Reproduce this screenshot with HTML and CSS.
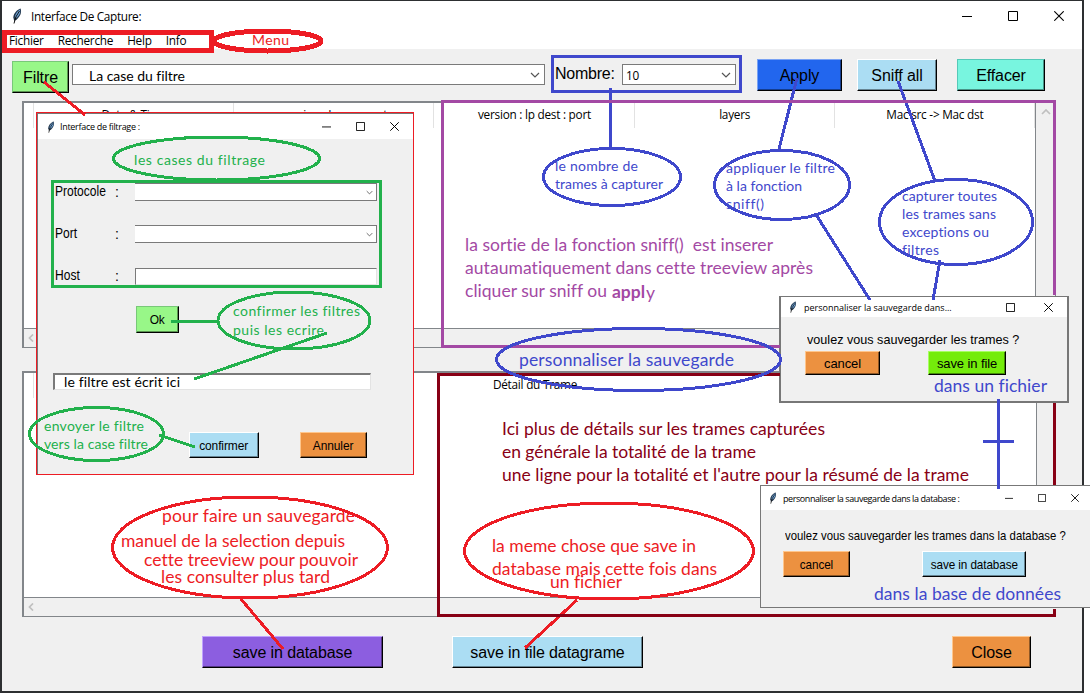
FILE: index.html
```html
<!DOCTYPE html>
<html lang="fr">
<head>
<meta charset="utf-8">
<title>Interface De Capture</title>
<link rel="stylesheet" href="styles.css">
</head>
<body>
<svg class="defs" width="0" height="0">
  <symbol id="feather" viewBox="0 0 10 16">
    <path d="M8.600 .5C5.500 1.500 1.500 5 1.300 9.500L2.200 13L4.800 11.500C8 8.500 10 4.500 8.600 .5Z" fill="#20344a"/>
    <path d="M8 1.500C5.500 3 3 6 2.800 10L5 9.500C7.500 7 8.800 4.500 8 1.500Z" fill="#6fa5da"/>
    <path d="M7.500 3L3.800 9L2 15.500" fill="none" stroke="#111" stroke-width="1"/>
  </symbol>
  <symbol id="min" viewBox="0 0 10 10"><path d="M0 5.500H10" stroke="#000"/></symbol>
  <symbol id="max" viewBox="0 0 10 10"><path d="M.5 .5H9.500V9.500H.5Z" fill="none" stroke="#000"/></symbol>
  <symbol id="x" viewBox="0 0 10 10"><path d="M.3 .3L9.700 9.700M9.700 .3L.3 9.700" stroke="#000" stroke-width="1.100"/></symbol>
  <symbol id="down" viewBox="0 0 10 6"><path d="M1 1L5 5L9 1" fill="none" stroke="#555" stroke-width="1.200"/></symbol>
  <symbol id="up" viewBox="0 0 10 6"><path d="M1 5L5 1L9 5" fill="none" stroke="#bfbfbf" stroke-width="1.700"/></symbol>
  <symbol id="left" viewBox="0 0 6 8"><path d="M5 .5L1.500 4L5 7.500" fill="none" stroke="#bfbfbf" stroke-width="1.700"/></symbol>
</svg>
<div class="desktop">
  <main class="window">
    <header class="titlebar">
      <svg class="feather"><use href="#feather"/></svg>
      <span class="title">Interface De Capture:</span>
      <span class="controls"><svg><use href="#min"/></svg><svg><use href="#max"/></svg><svg><use href="#x"/></svg></span>
    </header>
    <nav class="menu"><span>Fichier</span><span>Recherche</span><span>Help</span><span>Info</span></nav>
    <section class="toolbar">
      <button class="btn green filter-btn">Filtre</button>
      <div class="combo main-combo"><svg><use href="#down"/></svg></div>
      <label class="count">Nombre:</label>
      <div class="combo count-combo"><span>10</span><svg><use href="#down"/></svg></div>
      <button class="btn blue apply">Apply</button>
      <button class="btn sky sniff">Sniff all</button>
      <button class="btn aqua clear">Effacer</button>
    </section>
    <section class="tree">
      <div class="tree-head"><i></i><span>Date &amp; Time</span><span>version : Ip src : port</span><span>version : lp dest : port</span><span>layers</span><span>Mac src -&gt; Mac dst</span></div>
      <div class="vscroll"><svg><use href="#up"/></svg></div>
      <div class="hscroll"><svg><use href="#left"/></svg></div>
    </section>
    <section class="tree second">
      <div class="tree-head detail"><i></i><span>Détail du Trame</span></div>
      <div class="vscroll"></div>
      <div class="hscroll"><svg><use href="#left"/></svg></div>
    </section>
    <footer class="actions">
      <button class="btn violet save-db">save in database</button>
      <button class="btn sky save-file">save in file datagrame</button>
      <button class="btn orange close">Close</button>
    </footer>
  </main>

  <section class="dialog filter-dialog">
    <header class="titlebar">
      <svg class="feather"><use href="#feather"/></svg><span class="title">Interface de filtrage :</span>
      <span class="controls"><svg><use href="#min"/></svg><svg><use href="#max"/></svg><svg><use href="#x"/></svg></span>
    </header>
    <div class="fields">
      <label>Protocole</label><b>:</b><div class="combo"><svg><use href="#down"/></svg></div>
      <label>Port</label><b>:</b><div class="combo"><svg><use href="#down"/></svg></div>
      <label>Host</label><b>:</b><div class="entry"></div>
    </div>
    <button class="btn green ok"><span>Ok</span></button>
    <div class="entry result"></div>
    <div class="dialog-actions">
      <button class="btn sky"><span>confirmer</span></button>
      <button class="btn orange"><span>Annuler</span></button>
    </div>
  </section>

  <section class="dialog file-dialog">
    <header class="titlebar">
      <svg class="feather"><use href="#feather"/></svg><span class="title">personnaliser la sauvegarde dans...</span>
      <span class="controls"><svg><use href="#max"/></svg><svg><use href="#x"/></svg></span>
    </header>
    <p><span>voulez vous sauvegarder les trames ?</span></p>
    <div class="dialog-actions">
      <button class="btn orange"><span>cancel</span></button>
      <button class="btn lime"><span>save in file</span></button>
    </div>
  </section>

  <section class="dialog db-dialog">
    <header class="titlebar">
      <svg class="feather"><use href="#feather"/></svg><span class="title">personnaliser la sauvegarde dans la database :</span>
      <span class="controls"><svg><use href="#min"/></svg><svg><use href="#max"/></svg><svg><use href="#x"/></svg></span>
    </header>
    <p><span>voulez vous sauvegarder les trames dans la database ?</span></p>
    <div class="dialog-actions">
      <button class="btn orange"><span>cancel</span></button>
      <button class="btn sky"><span>save in database</span></button>
    </div>
  </section>

  <svg class="notes" viewBox="0 0 1090 700">
    <g class="shape red">
      <rect class="thick" x="4.500" y="32.500" width="207" height="17.500"/>
      <ellipse class="thick" cx="267.500" cy="41" rx="53.500" ry="10"/>
      <path d="M44 82L85 115"/>
      <path class="thin" d="M36.500 112.500H413.500V474.500H36.500Z"/>
      <ellipse cx="250" cy="547.500" rx="137.500" ry="50.500"/>
      <path d="M241 599L283 649"/>
      <ellipse cx="609" cy="551" rx="144.500" ry="48"/>
      <path d="M577 600L525 648"/>
    </g>
    <g class="shape blue-ink">
      <rect x="552.500" y="56.500" width="188" height="35"/>
      <path d="M610.500 88V148"/>
      <ellipse cx="612" cy="177" rx="68.500" ry="28.500"/>
      <path d="M797 78L779 149"/>
      <ellipse cx="782" cy="185" rx="67.500" ry="34.500"/>
      <path d="M815 213L870 300"/>
      <path d="M898 81L935 181"/>
      <ellipse cx="956" cy="222" rx="76.500" ry="42.500"/>
      <path d="M940 260L933 300"/>
    </g>
    <g class="shape purple"><path d="M780 346.500H442.500V101.500H1054.500V295"/></g>
    <g class="shape maroon"><path d="M780 374.500H438.500V615.500H1054.500V609M1054.500 403V485"/></g>
    <g class="shape blue-ink">
      <ellipse cx="638.500" cy="359.500" rx="142" ry="31"/>
      <path d="M998.500 399V489M983 441.500H1014"/>
    </g>
    <g class="shape green-ink">
      <ellipse cx="216.500" cy="158.500" rx="103" ry="21.500"/>
      <rect x="52.500" y="181.500" width="328" height="105"/>
      <ellipse cx="294" cy="320.500" rx="76" ry="28.500"/>
      <path d="M171 321.500H217M327 333L194 379M159 435L195 447"/>
      <ellipse cx="96.500" cy="434" rx="67" ry="26.500"/>
    </g>
    <g class="small black">
      <text x="89" y="81" textLength="96">La case du filtre</text>
      <text x="64" y="387" textLength="116">le filtre est écrit ici</text>
    </g>
    <g class="small red-text"><text x="252" y="45" textLength="37">Menu</text></g>
    <g class="small green-text">
      <text x="134" y="165" textLength="131">les cases du filtrage</text>
      <text x="233" y="316" textLength="127">confirmer les filtres</text>
      <text x="233" y="335" textLength="91">puis les ecrire</text>
      <text x="44" y="431" textLength="100">envoyer le filtre</text>
      <text x="44" y="449" textLength="104">vers la case filtre</text>
    </g>
    <g class="small blue-text">
      <text x="555" y="171" textLength="83">le nombre de</text>
      <text x="555" y="189" textLength="108">trames à capturer</text>
      <text x="726" y="173" textLength="109">appliquer le filtre</text>
      <text x="726" y="191" textLength="76">à la fonction</text>
      <text x="726" y="209" textLength="38">sniff()</text>
      <text x="902" y="201" textLength="95">capturer toutes</text>
      <text x="902" y="219" textLength="94">les trames sans</text>
      <text x="902" y="237" textLength="87">exceptions ou</text>
      <text x="902" y="255" textLength="37">filtres</text>
    </g>
    <g class="large purple-text">
      <text x="465" y="251" textLength="308">la sortie de la fonction sniff()&#160; est inserer</text>
      <text x="465" y="274" textLength="348">autaumatiquement dans cette treeview après</text>
      <text x="465" y="297" textLength="142">cliquer sur sniff ou</text>
      <text class="bold" x="612" y="298" textLength="33">appl</text>
      <text x="646" y="299">y</text>
    </g>
    <g class="large blue-text">
      <text x="519" y="366" textLength="215">personnaliser la sauvegarde</text>
      <text x="934" y="392" textLength="113">dans un fichier</text>
      <text x="874" y="600" textLength="187">dans la base de données</text>
    </g>
    <g class="large maroon-text">
      <text x="502" y="435" textLength="323">Ici plus de détails sur les trames capturées</text>
      <text x="502" y="458" textLength="254">en générale la totalité de la trame</text>
      <text x="502" y="481" textLength="467">une ligne pour la totalité et l'autre pour la résumé de la trame</text>
    </g>
    <g class="large red-text">
      <text x="162" y="522" textLength="193">pour faire un sauvegarde</text>
      <text x="121" y="547" textLength="224">manuel de la selection depuis</text>
      <text x="144" y="566" textLength="214">cette treeview pour pouvoir</text>
      <text x="161" y="583" textLength="169">les consulter plus tard</text>
      <text x="492" y="552" textLength="204">la meme chose que save in</text>
      <text x="492" y="575" textLength="225">database mais cette fois dans</text>
      <text x="550" y="588" textLength="72">un fichier</text>
    </g>
  </svg>
</div>
</body>
</html>
```

FILE: styles.css
```css
* { box-sizing: border-box; }
body { margin: 0; background: #fff; font: 11.8px "Open Sans", "Noto Sans", sans-serif; letter-spacing: -.25px; color: #000; overflow: hidden; }
.defs { position: absolute; }
.desktop { position: relative; width: 1090px; height: 700px; overflow: hidden; }
.window { width: 1084px; height: 693px; border: solid #2d2f31; border-width: 1px 2px 2px; background: #f0f0f0; display: flex; flex-direction: column; }

.titlebar { display: flex; align-items: center; background: #fff; flex: none; white-space: nowrap; }
.window > .titlebar { height: 29px; padding: 0 18px 0 10px; }
.feather { width: 10px; height: 16px; flex: none; }
.window > .titlebar .title { margin-left: 9px; letter-spacing: -.35px; }
.controls { margin-left: auto; display: flex; }
.controls svg { width: 10px; height: 10px; }
.window > .titlebar .controls { gap: 36px; }
.menu { height: 19px; background: #fff; display: flex; gap: 14px; padding-left: 7px; line-height: 21px; }

.btn { font: 16px "Liberation Sans", Arial, sans-serif; letter-spacing: -.1px; color: #000; border: 1px solid; border-color: #fff #000 #000 #fff; box-shadow: inset -1px -1px #0006; padding: 1px 0 0; margin: 0; height: 32px; border-radius: 0; white-space: nowrap; flex: none; }
.green { background: #98f788; border-color: #78c878 #000 #000 #78c878; }
.blue { background: #2266ee; border-color: #79a2f4 #000 #000 #79a2f4; }
.sky { background: #abddf3; }
.aqua { background: #78f5df; border-color: #55c9b8 #000 #000 #55c9b8; }
.violet { background: #8c5ee0; border-color: #bfa1ff #000 #000 #bfa1ff; }
.orange { background: #ec9140; border-color: #ffc68c #000 #000 #ffc68c; }
.lime { background: #74ec0b; border-color: #a7ff63 #000 #000 #a7ff63; }

.toolbar { display: flex; height: 52px; padding: 10px 0 0 10px; align-items: flex-start; flex: none; }
.filter-btn { width: 57px; margin-top: 2px; }
.combo { background: #fff; border: 1px solid #7a7a7a; height: 21px; display: flex; align-items: center; padding: 0 4px; }
.combo svg { width: 10px; height: 6px; margin-left: auto; }
.main-combo { width: 473px; margin: 5px 0 0 3px; }
.count { font: 16px "Liberation Sans", Arial, sans-serif; margin: 6px 0 0 10px; width: 67px; }
.count-combo { width: 114px; margin-top: 5px; padding-left: 3px; }
.apply { width: 85px; margin-left: 21px; }
.sniff { width: 80px; margin-left: 15px; }
.clear { width: 88px; margin-left: 20px; }

.tree { margin-left: 20px; width: 1034px; height: 247px; background: #fff; border: solid #82868a; border-width: 2px 1px 1px 2px; display: grid; grid-template: 1fr 19px / 1fr 20px; flex: none; }
.second { margin-top: 23px; height: 246px; }
.tree-head { display: flex; height: 25px; line-height: 23px; }
.tree-head i { width: 10px; border-right: 1px solid #e2e2e2; }
.tree-head span { width: 200.200px; padding-left: 1px; border-right: 1px solid #e2e2e2; text-align: center; }
.detail span { width: 1002px; }
.vscroll { background: #f0f0f0; border-left: 1px solid #82868a; text-align: center; line-height: 14px; }
.second .vscroll { border-left-color: #82868a; }
.vscroll svg { width: 10px; height: 6px; }
.hscroll { grid-column: 1 / 3; border-top: 1px solid #82868a; background: #f0f0f0; padding-left: 4px; display: flex; align-items: center; }
.hscroll svg { width: 6px; height: 8px; }

.actions { display: flex; padding: 19px 51px 0 200px; }
.save-db { width: 181px; }
.save-file { width: 191px; margin-left: 69px; }
.close { width: 79px; margin-left: auto; }

.dialog { position: absolute; background: #f0f0f0; border: 1px solid #777; font-size: 9px; letter-spacing: 0; }
.dialog .feather { width: 8px; height: 12px; }
.dialog .btn { font-size: 13px; }
.dialog .btn span, .dialog p span { display: inline-block; }
.dialog p { margin: 0; font: 13px/16px "Liberation Sans", Arial, sans-serif; white-space: nowrap; }
.dialog p span { transform-origin: left; }
.dialog-actions { display: flex; }

.filter-dialog { left: 37px; top: 113px; width: 377px; height: 362px; }
.filter-dialog .titlebar { height: 25px; padding: 0 14px 0 9px; }
.filter-dialog .title { margin-left: 5px; letter-spacing: -.3px; }
.filter-dialog .controls { gap: 25px; }
.filter-dialog .controls svg { width: 9px; height: 9px; }
.fields { display: grid; grid-template-columns: 58px 22px 242px; grid-auto-rows: 18px; row-gap: 24px; margin: 44px 0 0 17px; align-items: center; font: 14px "Liberation Sans", Arial, sans-serif; }
.fields label { transform: translateY(-1px) scaleX(.86); transform-origin: left; }
.fields b { font-weight: normal; padding-left: 2px; }
.fields .combo { height: 18px; border-left: 0; }
.fields .combo svg { width: 7px; height: 5px; }
.fields .combo { padding-right: 3px; }
.entry { height: 17px; background: #fff; border: solid; border-width: 1px; border-color: #7a7a7a #e3e3e3 #e3e3e3 #7a7a7a; }
.filter-dialog .btn { height: 26px; }
.filter-dialog .btn span { transform: scaleX(.92); }
.filter-dialog .ok { display: block; width: 43px; margin: 21px 0 0 98px; height: 27px; padding: 0; }
.result { width: 318px; margin: 40px 0 0 15px; border-top-width: 2px; border-left-width: 2px; }
.filter-dialog .dialog-actions { gap: 41px; margin: 42px 0 0 151px; }
.filter-dialog .dialog-actions .btn { width: 70px; padding: 0; }
.filter-dialog .dialog-actions .orange { width: 67px; }

.file-dialog { left: 779px; top: 296px; width: 290px; height: 107px; border-width: 1px 2px 2px; }
.file-dialog .titlebar { height: 20px; padding: 0 14px 0 8px; }
.file-dialog .title { margin-left: 7px; }
.file-dialog .controls { gap: 29px; }
.file-dialog .controls svg { width: 9px; height: 9px; }
.file-dialog p { margin: 15px 0 3px 26px; }
.file-dialog p span { transform: scaleX(.97); }
.file-dialog .dialog-actions { padding-left: 24px; gap: 48px; }
.file-dialog .btn { width: 75px; height: 24px; }
.file-dialog .lime { width: 78px; }

.db-dialog { left: 760px; top: 485px; width: 336px; height: 123px; }
.db-dialog .titlebar { height: 24px; padding: 0 16px 0 8px; }
.db-dialog .title { margin-left: 6px; letter-spacing: -.42px; }
.db-dialog .controls { gap: 25px; }
.db-dialog .controls svg { width: 8px; height: 8px; }
.db-dialog p { margin: 18px 0 7px 24px; }
.db-dialog p span { transform: scaleX(.873); }
.db-dialog .dialog-actions { padding-left: 22px; gap: 72px; }
.db-dialog .btn { width: 67px; height: 26px; padding: 0; }
.db-dialog .btn span { transform: scaleX(.9); }
.db-dialog .sky { width: 104px; }

.notes { position: absolute; left: 0; top: 0; width: 1090px; height: 700px; }
.shape { fill: none; stroke-width: 3; shape-rendering: crispEdges; }
.thick { stroke-width: 5; }
.thin { stroke-width: 1; }
.red { stroke: #ed1c24; }
.blue-ink { stroke: #3f48cc; }
.green-ink { stroke: #22b14c; }
.purple { stroke: #a349a4; }
.maroon { stroke: #880015; }
.small, .large { font-family: Lato, sans-serif; font-size: 14px; letter-spacing: 0; font-variant-ligatures: none; }
.large { font-size: 17.500px; }
.bold { font-weight: bold; }
.red-text { fill: #ed1c24; }
.green-text { fill: #22b14c; }
.blue-text { fill: #3f48cc; }
.purple-text { fill: #a349a4; }
.maroon-text { fill: #880015; }
```
